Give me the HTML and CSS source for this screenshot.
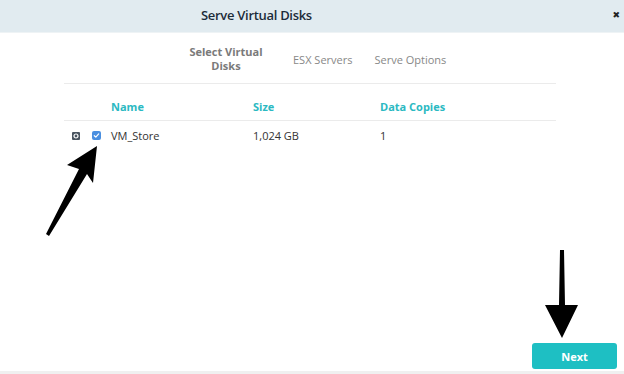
FILE: index.html
```html
<!DOCTYPE html>
<html>
<head>
<meta charset="utf-8">
<link rel="stylesheet" href="styles.css">
</head>
<body>
<div class="page">
  <header class="header">
    <h1 class="title">Serve Virtual Disks</h1>
    <span class="close">✖</span>
  </header>
  <nav class="tabs">
    <div class="tab tab-active">Select Virtual<br>Disks</div>
    <div class="tab">ESX Servers</div>
    <div class="tab">Serve Options</div>
  </nav>
  <div class="table">
    <div class="row head">
      <div class="c-gear"></div>
      <div class="c-check"></div>
      <div class="c-name">Name</div>
      <div class="c-size">Size</div>
      <div class="c-copies">Data Copies</div>
    </div>
    <div class="row body-row">
      <div class="c-gear">
        <span class="gear"><svg width="8" height="8" viewBox="0 0 8 8"><circle cx="4" cy="4" r="2" fill="none" stroke="#fff" stroke-width="1.2"/></svg></span>
      </div>
      <div class="c-check">
        <span class="check"><svg width="9" height="9" viewBox="0 0 9 9"><path d="M2.3 4.7 L3.8 6.1 L6.7 2.9" fill="none" stroke="#fff" stroke-width="1.2" stroke-linecap="round" stroke-linejoin="round"/></svg></span>
      </div>
      <div class="c-name">VM_Store</div>
      <div class="c-size">1,024 GB</div>
      <div class="c-copies">1</div>
    </div>
  </div>
  <div class="spacer"></div>
  <footer class="footer">
    <button class="next">Next</button>
  </footer>
  <div class="strip"></div>
  <svg class="arrows" width="624" height="374" viewBox="0 0 624 374">
    <polygon points="97,146 67,165 79,169 46,234 49,236 87,174 93,183" fill="#000"/>
    <polygon points="560,250 564,250 565,305 578,305 562,338 545,305 559,305" fill="#000"/>
  </svg>
</div>
</body>
</html>
```
FILE: styles.css
```css
* { box-sizing: border-box; }
html, body { margin: 0; padding: 0; }
body {
  width: 624px;
  height: 374px;
  overflow: hidden;
  background: #fff;
  font-family: "Open Sans", "DejaVu Sans", sans-serif;
  color: #333;
}
.page {
  position: relative;
  width: 624px;
  height: 374px;
  display: flex;
  flex-direction: column;
}
.header {
  height: 33px;
  background: #e1ebf0;
  display: flex;
  align-items: center;
  padding-left: 201px;
  padding-right: 4px;
  border-bottom: 1px solid #eef3f5;
}
.title {
  margin: 0 0 3px 0;
  font-size: 13px;
  font-weight: 600;
  color: #1c2c3a;
  letter-spacing: -0.3px;
}
.close {
  margin-left: auto;
  margin-bottom: 4px;
  font-size: 9px;
  color: #222;
  font-weight: bold;
}
.tabs {
  display: flex;
  align-items: center;
  height: 51px;
  margin: 0 68px 0 64px;
  padding-left: 121px;
  padding-top: 4px;
  gap: 22px;
  border-bottom: 1px solid #ebebeb;
  font-size: 11px;
  color: #888;
}
.tab { line-height: 14px; }
.tab-active {
  width: 82px;
  margin-right: 4px;
  font-weight: 700;
  color: #7a7a7a;
  text-align: center;
  padding-bottom: 2px;
}
.table {
  margin: 0 68px 0 64px;
  font-size: 11px;
}
.row {
  display: flex;
  align-items: center;
}
.head {
  height: 37px;
  border-bottom: 1px solid #ebebeb;
  color: #2bb9c2;
  font-weight: 700;
  padding-top: 8px;
}
.body-row {
  height: 29px;
  color: #333;
}
.c-gear { width: 28px; padding-left: 8px; display: flex; }
.c-check { width: 19px; display: flex; }
.c-name { width: 142px; }
.c-size { width: 127px; }
.c-copies { flex: 1; }
.gear {
  width: 8px; height: 8px;
  background: #4a5560;
  border-radius: 1px;
  display: flex;
}
.check {
  width: 9px; height: 9px;
  background: #4a8fe0;
  border-radius: 2px;
  display: flex;
}
.spacer { flex: 1; }
.footer {
  display: flex;
  justify-content: flex-end;
  padding-right: 7px;
  padding-bottom: 2px;
}
.next {
  width: 85px;
  height: 26px;
  background: #1ebfc3;
  border: none;
  border-radius: 3px;
  color: #fff;
  font-family: "Open Sans", "DejaVu Sans", sans-serif;
  font-weight: 700;
  font-size: 11px;
}
.strip {
  height: 3px;
  background: #f0f0f0;
}
.arrows {
  position: absolute;
  left: 0;
  top: 0;
  pointer-events: none;
}
```
